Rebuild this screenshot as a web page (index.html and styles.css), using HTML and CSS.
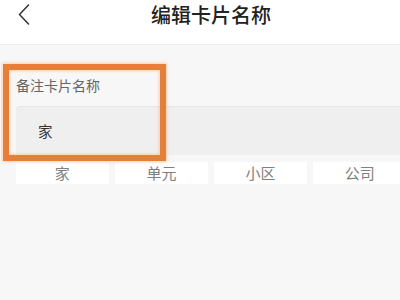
FILE: index.html
```html
<!DOCTYPE html>
<html lang="zh">
<head>
<meta charset="utf-8">
<link rel="stylesheet" href="styles.css">
</head>
<body>
<div class="screen">
  <header class="nav">
    <span class="back">
      <svg width="12" height="21" viewBox="0 0 12 21"><polyline points="10.5,1 1.5,10.5 10.5,20" fill="none" stroke="#333" stroke-width="1.5" stroke-linecap="round" stroke-linejoin="round"/></svg>
    </span>
    <h1 class="title">编辑卡片名称</h1>
  </header>
  <main class="content">
    <div class="label">备注卡片名称</div>
    <div class="input">家</div>
    <div class="chips">
      <div class="chip">家</div>
      <div class="chip">单元</div>
      <div class="chip">小区</div>
      <div class="chip chip-last">公司</div>
    </div>
    <div class="highlight"></div>
  </main>
</div>
</body>
</html>
```
FILE: styles.css
```css
html, body {
  margin: 0;
  padding: 0;
  background: #f7f7f7;
}
.screen {
  width: 400px;
  height: 300px;
  overflow: hidden;
  font-family: "Noto Sans CJK SC", "Noto Sans", sans-serif;
  background: #f7f7f7;
}
.nav {
  height: 44px;
  background: #fff;
  border-bottom: 1px solid #ececec;
  position: relative;
  display: flex;
  justify-content: center;
  padding-left: 22px;
}
.back {
  position: absolute;
  left: 18px;
  top: 4px;
  display: block;
  line-height: 0;
}
.title {
  margin: 0;
  font-size: 20px;
  line-height: 30px;
  font-weight: 500;
  color: #222;
}
.content {
  position: relative;
  padding: 30px 0 0 16px;
}
.label {
  font-size: 14px;
  line-height: 20px;
  color: #666;
}
.input {
  margin-top: 11px;
  height: 48px;
  border-top: 1px solid #e6e6e6;
  background: #efefef;
  font-size: 14.5px;
  line-height: 48px;
  color: #333;
  padding-left: 22px;
  border-radius: 4px 0 0 4px;
}
.chips {
  margin-top: 7px;
  display: grid;
  grid-template-columns: 92.6px 92.6px 92.6px 1fr;
  gap: 6.5px;
}
.chip {
  height: 22px;
  background: #fff;
  text-align: center;
  font-size: 15px;
  line-height: 22px;
  color: #808080;
}
.chip-last {
  padding-left: 6px;
}
.highlight {
  position: absolute;
  left: 3px;
  top: 19px;
  width: 151px;
  height: 85px;
  border: 6px solid #e57f3a;
  box-shadow: 0 0 3px 1px rgba(255, 190, 140, 0.7), inset 0 0 3px 1px rgba(255, 190, 140, 0.7);
  pointer-events: none;
}
```
